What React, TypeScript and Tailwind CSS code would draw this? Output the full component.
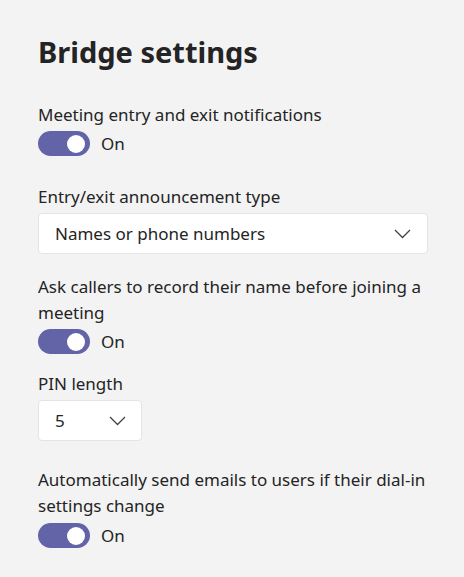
import React from 'react';

const Toggle: React.FC = () => (
  <div className="flex items-center h-[25px]">
    <div className="relative w-[52px] h-[25px] rounded-full bg-[#6264a7]">
      <div className="absolute right-[5px] top-[3.5px] w-[18px] h-[18px] rounded-full bg-white" />
    </div>
    <span className="ml-[11px]">On</span>
  </div>
);

const Chevron: React.FC = () => (
  <svg width="17" height="10" viewBox="0 0 17 10" fill="none">
    <polyline points="1,1 8.5,8.5 16,1" stroke="#424242" strokeWidth="1.3" />
  </svg>
);

export default function App() {
  return (
    <div
      className="min-h-[577px] w-[464px] bg-[#f3f3f3] text-[#242424] pl-[38px] pr-[36px] pt-[32px]"
      style={{ fontFamily: '"Noto Sans", "Open Sans", sans-serif' }}
    >
      <h1 className="text-[29px] leading-[40px] font-bold">Bridge settings</h1>

      <div className="mt-[30px] text-[17px] leading-[26px]">
        <div>Meeting entry and exit notifications</div>
        <div className="mt-[3px]">
          <Toggle />
        </div>

        <div className="mt-[28px]">Entry/exit announcement type</div>
        <div className="mt-[3px] h-[41px] bg-white border border-[#e4e4e4] rounded-[4px] flex items-center justify-between pl-[16px] pr-[16px]">
          <span>Names or phone numbers</span>
          <Chevron />
        </div>

        <div className="mt-[20px] pr-[2px]">Ask callers to record their name before joining a meeting</div>
        <div className="mt-[3px]">
          <Toggle />
        </div>

        <div className="mt-[17px]">PIN length</div>
        <div className="mt-[3px] w-[104px] h-[41px] bg-white border border-[#e4e4e4] rounded-[4px] flex items-center justify-between pl-[16px] pr-[15px]">
          <span>5</span>
          <Chevron />
        </div>

        <div className="mt-[26px] pr-[2px]">Automatically send emails to users if their dial-in settings change</div>
        <div className="mt-[4px]">
          <Toggle />
        </div>
      </div>
    </div>
  );
}
